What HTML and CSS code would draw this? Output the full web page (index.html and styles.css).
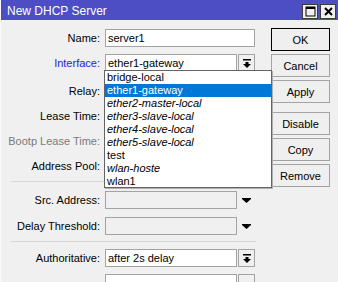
FILE: index.html
```html
<!DOCTYPE html>
<html lang="en">
<head>
  <meta charset="UTF-8" />
  <title>New DHCP Server</title>
  <link rel="stylesheet" href="styles.css">
</head>
<body>
  <div class="window">
    <div class="titlebar">
      <span class="title">New DHCP Server</span>
      <div class="title-buttons">
        <span class="tbtn">
          <svg width="11" height="11" viewBox="0 0 11 11"><rect x="1" y="1" width="9" height="9" fill="none" stroke="#000" stroke-width="1"/><rect x="1" y="1" width="9" height="2" fill="#000"/></svg>
        </span>
        <span class="tbtn">
          <svg width="11" height="11" viewBox="0 0 11 11"><path d="M2 2 L9 9 M9 2 L2 9" stroke="#000" stroke-width="2"/></svg>
        </span>
      </div>
    </div>

    <div class="content">
      <div class="form">
        <div class="section">
          <div class="row">
            <span class="label">Name:</span>
            <div class="box wide">server1</div>
          </div>
          <div class="row">
            <span class="label link">Interface:</span>
            <div class="box narrow">ether1-gateway</div>
            <div class="drop-btn">
              <svg width="8" height="9" viewBox="0 0 8 9"><rect x="0" y="0" width="8" height="1.5"/><rect x="2.5" y="3" width="3" height="2"/><polygon points="0,5 8,5 4,9"/></svg>
            </div>
          </div>
          <div class="row relay">
            <span class="label">Relay:</span>
            <div class="box wide"></div>
          </div>
          <div class="row">
            <span class="label">Lease Time:</span>
            <div class="box wide"></div>
          </div>
          <div class="row">
            <span class="label muted">Bootp Lease Time:</span>
            <div class="box wide"></div>
          </div>
          <div class="row">
            <span class="label">Address Pool:</span>
            <div class="box wide"></div>
          </div>
        </div>

        <div class="sep"></div>

        <div class="section second">
          <div class="row">
            <span class="label">Src. Address:</span>
            <div class="box narrow off"></div>
            <div class="arrow">
              <svg width="9" height="5" viewBox="0 0 9 5"><polygon points="0,0 9,0 9,1 4.5,5 0,1"/></svg>
            </div>
          </div>
          <div class="row">
            <span class="label">Delay Threshold:</span>
            <div class="box narrow off"></div>
            <div class="arrow">
              <svg width="9" height="5" viewBox="0 0 9 5"><polygon points="0,0 9,0 9,1 4.5,5 0,1"/></svg>
            </div>
          </div>
        </div>

        <div class="sep"></div>

        <div class="section third">
          <div class="row">
            <span class="label">Authoritative:</span>
            <div class="box narrow">after 2s delay</div>
            <div class="drop-btn">
              <svg width="8" height="9" viewBox="0 0 8 9"><rect x="0" y="0" width="8" height="1.5"/><rect x="2.5" y="3" width="3" height="2"/><polygon points="0,5 8,5 4,9"/></svg>
            </div>
          </div>
          <div class="row">
            <span class="label"></span>
            <div class="box narrow"></div>
            <div class="drop-btn"></div>
          </div>
        </div>
      </div>

      <div class="actions">
        <button class="btn default">OK</button>
        <button class="btn">Cancel</button>
        <button class="btn">Apply</button>
        <button class="btn spaced">Disable</button>
        <button class="btn">Copy</button>
        <button class="btn">Remove</button>
      </div>
    </div>

    <!-- open interface list -->
    <ul class="dropdown">
      <li>bridge-local</li>
      <li class="selected">ether1-gateway</li>
      <li class="slave">ether2-master-local</li>
      <li class="slave">ether3-slave-local</li>
      <li class="slave">ether4-slave-local</li>
      <li class="slave">ether5-slave-local</li>
      <li>test</li>
      <li class="slave">wlan-hoste</li>
      <li>wlan1</li>
    </ul>
  </div>
</body>
</html>
```

FILE: styles.css
```css
* {
  box-sizing: border-box;
}
html, body {
  margin: 0;
  padding: 0;
  height: 100%;
  overflow: hidden;
  background: #f0f0f0;
  font-family: "Liberation Sans", Arial, sans-serif;
  font-size: 11px;
  color: #000;
}
.window {
  position: relative;
  height: 100%;
  border-left: 1px solid #fafafa;
}
.titlebar {
  display: flex;
  align-items: center;
  height: 20px;
  padding: 2px 2px 0 6px;
  background: #4d4dc4;
  color: #fff;
}
.title {
  font-size: 12px;
}
.title-buttons {
  display: flex;
  gap: 2px;
  margin-left: auto;
}
.tbtn {
  display: flex;
  align-items: center;
  justify-content: center;
  width: 16px;
  height: 15px;
  background: #f0f0f0;
  border: 1px solid #3c3c3c;
}
.content {
  display: grid;
  grid-template-columns: 255px 59px;
  column-gap: 15px;
  padding-top: 8px;
}
.form {
  margin-top: 1px;
}
.section {
  display: flex;
  flex-direction: column;
  gap: 7px;
}
.second {
  margin-top: 9px;
  gap: 8px;
}
.third {
  margin-top: 7px;
}
.row {
  display: flex;
  align-items: center;
  height: 18px;
}
.relay {
  margin-top: 3px;
}
.label {
  width: 99px;
  margin-right: 5px;
  text-align: right;
  white-space: nowrap;
}
.link {
  color: #2323d8;
}
.muted {
  color: #7a7a7a;
}
.box {
  height: 18px;
  padding-left: 2px;
  line-height: 16px;
  background: #fff;
  border: 1px solid #a3a3a3;
  white-space: nowrap;
  overflow: hidden;
}
.wide {
  width: 150px;
}
.narrow {
  width: 132px;
  margin-right: 1px;
}
.off {
  background: #f0f0f0;
}
.drop-btn {
  display: flex;
  align-items: center;
  justify-content: center;
  width: 17px;
  height: 18px;
  background: #f0f0f0;
  border: 1px solid #a3a3a3;
}
.arrow {
  display: flex;
  justify-content: center;
  width: 17px;
}
.sep {
  height: 1px;
  margin: 6px 0 0 10px;
  background: #d9d9d9;
}
.actions {
  display: flex;
  flex-direction: column;
  gap: 3px;
}
.btn {
  height: 23px;
  padding: 0;
  font-family: inherit;
  font-size: 11px;
  color: #000;
  background: #efefef;
  border: 1px solid #a3a3a3;
}
.default {
  border-color: #000;
}
.spaced {
  margin-top: 6px;
}
.dropdown {
  position: absolute;
  left: 103px;
  top: 70px;
  width: 168px;
  height: 118px;
  margin: 0;
  padding: 0;
  list-style: none;
  background: #fff;
  border: 1px solid #646464;
  box-shadow: 1px 1px 0 #b0b0b0;
}
.dropdown li {
  height: 13px;
  padding-left: 2px;
  line-height: 13px;
  white-space: nowrap;
}
.dropdown .selected {
  background: #0078d7;
  color: #fff;
}
.dropdown .slave {
  font-style: italic;
}
```
